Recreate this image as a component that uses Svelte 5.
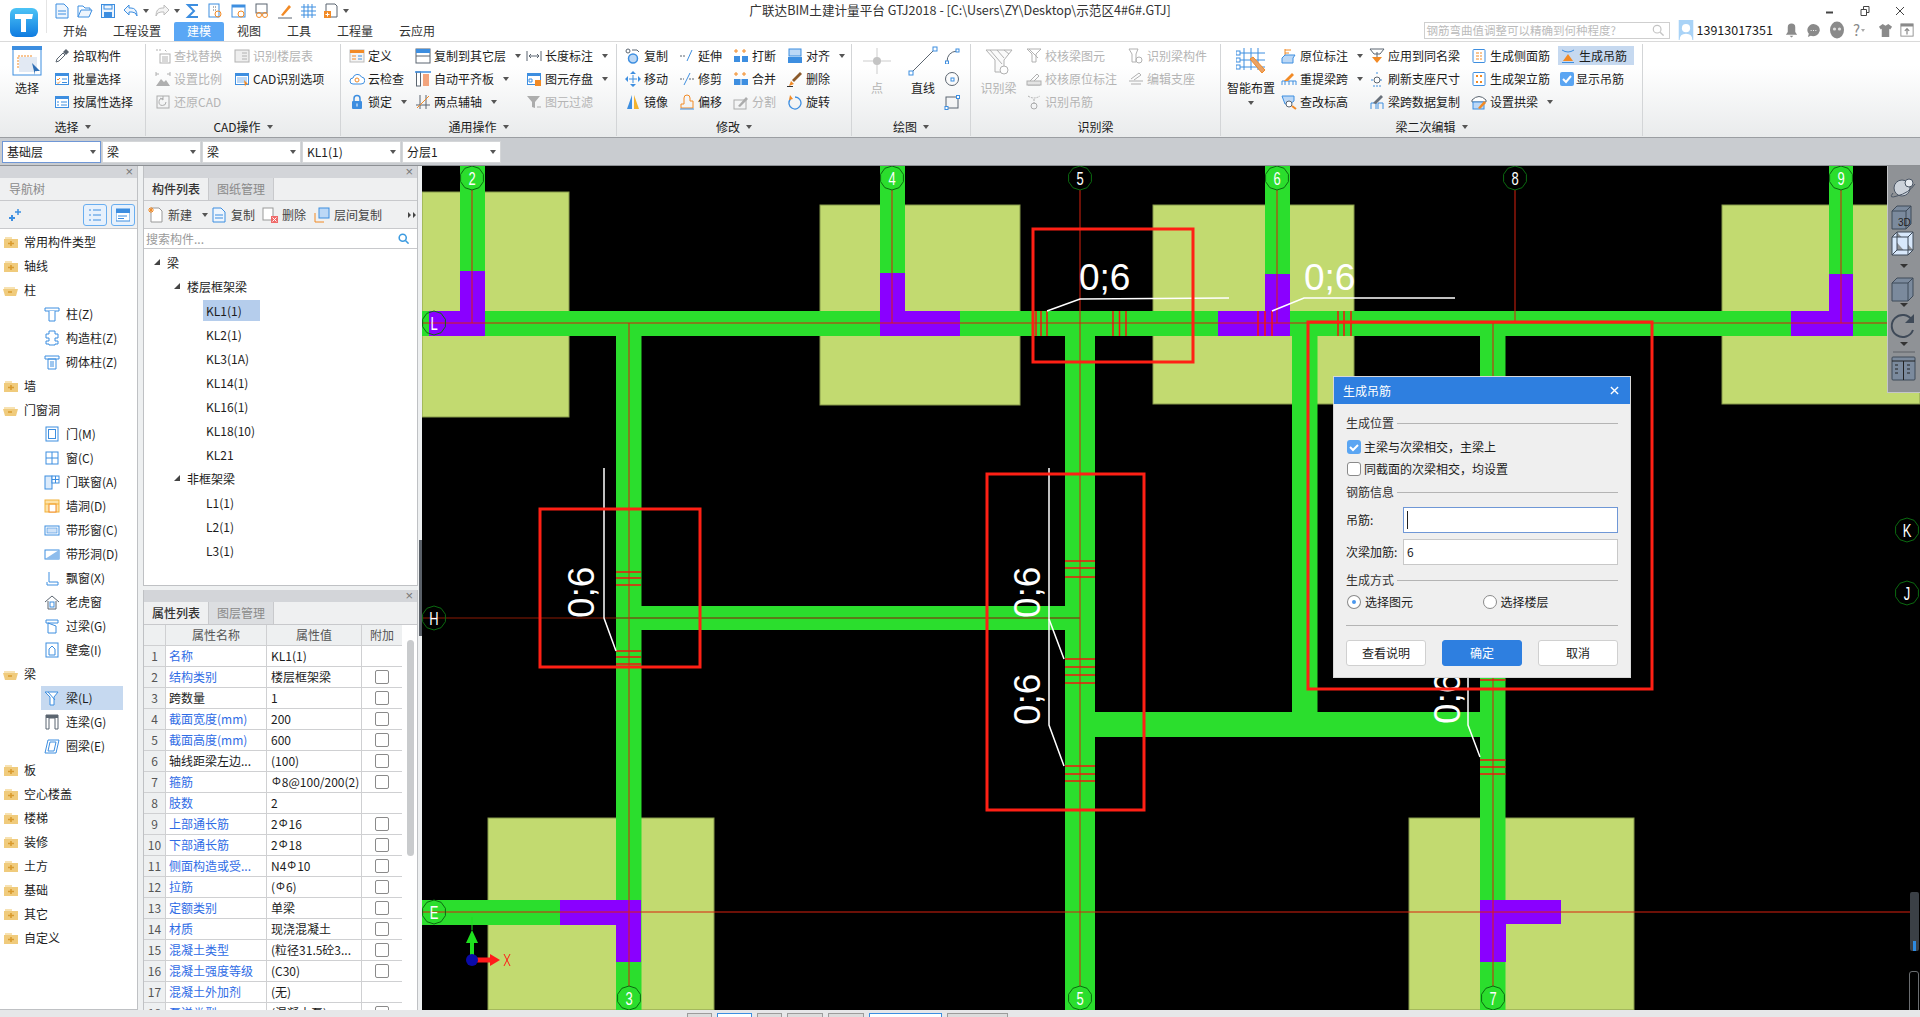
<script>
  const B = "#3d8ee0", O = "#f28a25", G = "#5b6570", L = "#bcd8f6";
  const win = `<rect x="1.5" y="2.5" width="13" height="11" fill="#fff" stroke="${B}"/><rect x="1" y="2" width="14" height="3" fill="${B}"/>`;
  const fold = (s) => `<path d="M1 5h14v9H1z" fill="#f0cb7c"/><path d="M2 3h7v2H2z" fill="#f7e2b2"/><path d="M5 9.5h6${s}" stroke="#d99b2e" stroke-width="1.6"/>`;

  const icons = {
    pick: `<path d="M2 14l1-3 6-6 2 2-6 6z" fill="#fff" stroke="${G}"/><path d="M9 4l3-3 3 3-3 3z" fill="${G}"/>`,
    batch: `${win}<path d="M3 8l1 1 2-2M3 11.5l1 1 2-2" stroke="${O}" fill="none"/><path d="M8 8h5M8 11.5h5" stroke="${B}"/>`,
    prop: `${win}<path d="M3 8h2M7 8h6M3 11h2M7 11h6" stroke="${B}"/>`,
    find: `<path d="M1 2h6M10 2l2 2" stroke="${G}" stroke-dasharray="2 1"/><rect x="5" y="6" width="10" height="9" fill="#fff" stroke="${G}"/><path d="M7 9h6M7 11h6M7 13h6" stroke="${G}"/>`,
    scale: `<path d="M1 3h3M12 3h3M1 1v4M15 1v4" stroke="${G}"/><path d="M1 15l5-7 3 3 2-2 4 6z" fill="${G}"/>`,
    restore: `<rect x="2" y="2" width="12" height="12" fill="none" stroke="${G}"/><path d="M11 8a3.500 3.500 0 1 1-3-3.500M8 2v4l-3-2" stroke="${G}" fill="none"/>`,
    floor: `<rect x="1" y="2" width="14" height="12" fill="#ddd" stroke="${G}"/><path d="M8 5h5M8 8h5M8 11h5" stroke="${G}"/>`,
    cad: `${win}<rect x="3" y="6" width="10" height="6" fill="${L}"/><path d="M10 9l4 4-2 .5-1 2z" fill="${O}"/>`,
    define: `<rect x="1" y="2" width="14" height="12" fill="#f4f4f4" stroke="#bbb"/><rect x="1" y="2" width="14" height="3" fill="${O}"/><path d="M3 8h4M3 11h4" stroke="${O}"/><path d="M9 8h4M9 11h4" stroke="${B}"/>`,
    cloud: `<path d="M4 13a3 3 0 0 1 0-6 4.500 4.500 0 0 1 8.500-1 3.500 3.500 0 0 1-.5 7z" fill="#fff" stroke="${B}"/><circle cx="8" cy="9" r="2" fill="none" stroke="${O}"/>`,
    lock: `<path d="M5 7V4.500a3 3 0 0 1 6 0V7" fill="none" stroke="${B}" stroke-width="1.500"/><rect x="3" y="7" width="10" height="8" rx="1" fill="${B}"/><rect x="7.500" y="9.500" width="1" height="3" fill="#fff"/>`,
    layer: `<rect x="1" y="1" width="14" height="14" fill="#fff" stroke="${G}"/><rect x="1" y="1" width="14" height="4" fill="${B}"/><path d="M1 8h14" stroke="${G}"/>`,
    flat: `<rect x="1.500" y="1" width="4" height="14" fill="#fff" stroke="${G}"/><rect x="8" y="3" width="6" height="12" fill="#f2a47d"/><path d="M0 1h16" stroke="${B}" stroke-width="1.500"/>`,
    two: `<path d="M5 1v14M1 11h14M11 1v14" stroke="${G}"/><path d="M2 14L14 2" stroke="${O}"/>`,
    len: `<path d="M1 3v10M15 3v10M3 8h10M3 8l2-2M3 8l2 2M13 8l-2-2M13 8l-2 2" stroke="${G}" fill="none"/>`,
    store: `${win}<path d="M3 8h3v3H3z" fill="none" stroke="${B}"/><rect x="9" y="9" width="6" height="6" fill="${O}"/>`,
    filter: `<path d="M1 2h13L9 8v6l-3-1V8z" fill="${G}"/><path d="M11 13h4" stroke="${G}"/>`,
    copy: `<circle cx="3" cy="3" r="2" fill="none" stroke="${G}"/><path d="M7 2h5l2 2" fill="none" stroke="${G}"/><circle cx="8" cy="10.500" r="4.500" fill="${L}" stroke="${B}" stroke-width="1.500"/>`,
    move: `<path d="M8 4v8M4 8h8" stroke="${B}"/><path d="M8 0l3 3H5zM8 16l3-3H5zM0 8l3-3v6zM16 8l-3-3v6z" fill="${B}"/>`,
    mirror: `<path d="M7 1v14H2z" fill="${B}"/><path d="M9 1v14h5z" fill="#f4b32c"/>`,
    extend: `<path d="M1 8h5" stroke="${G}" stroke-dasharray="2 1"/><path d="M8 13l5-11" stroke="${B}"/>`,
    trim: `<path d="M1 8h4M10 8h5" stroke="${G}" stroke-dasharray="2 1"/><path d="M5 14l6-12" stroke="${B}"/>`,
    offset: `<path d="M2 14v-4h3V4q0-3 3-3t3 3v3h3v7z" fill="none" stroke="${O}"/><path d="M1 15h14" stroke="${B}"/>`,
    brk: `<path d="M3 1v4M1 3h4M11 1v4M9 3h4" stroke="${O}"/><rect x="1" y="8" width="6" height="6" fill="${B}"/><rect x="9" y="8" width="6" height="6" fill="${B}"/>`,
    merge: `<path d="M3 1v4M1 3h4M11 1v4M9 3h4" stroke="${O}"/><rect x="1" y="8" width="14" height="6" fill="${B}"/><path d="M8 8v6" stroke="#fff"/>`,
    split: `<rect x="1" y="6" width="12" height="9" fill="none" stroke="${G}"/><path d="M5 12l8-9 2 2-8 8z" fill="${G}"/>`,
    align: `<rect x="2" y="1" width="12" height="7" fill="${L}" stroke="${B}"/><rect x="1" y="9" width="14" height="6" fill="${B}"/>`,
    del: `<path d="M2 15l2-5 3 3z" fill="${O}"/><path d="M5 9l8-8 2 2-8 8z" fill="#8b5a2b"/><path d="M0 15.500h6" stroke="#333"/>`,
    rotate: `<path d="M8 3a6 6 0 1 1-4.500 2" fill="none" stroke="${B}" stroke-width="1.300"/><path d="M3 1l3 4-4 1z" fill="${O}"/>`,
    arc: `<path d="M3 14q0-10 10-11" fill="none" stroke="${G}"/><rect x="1.500" y="13" width="3" height="3" fill="#fff" stroke="${B}"/><rect x="12" y="1" width="3" height="3" fill="#fff" stroke="${B}"/>`,
    circ: `<circle cx="8" cy="8" r="6.500" fill="none" stroke="${G}"/><rect x="7" y="7" width="3" height="3" fill="#fff" stroke="${B}"/>`,
    rct: `<rect x="2" y="3" width="12" height="11" fill="none" stroke="${G}"/><rect x="1" y="12.500" width="3" height="3" fill="#fff" stroke="${B}"/><rect x="12.500" y="1.500" width="3" height="3" fill="#fff" stroke="${B}"/>`,
    chk1: `<path d="M1 1h14l-5 5v8H6V6z" fill="none" stroke="${G}"/><path d="M3 1l9 9" stroke="${G}"/>`,
    chk2: `<path d="M2 14h12M3 11l8-8 2 2-6 6" fill="none" stroke="${G}"/><rect x="1" y="10" width="14" height="4" fill="#ccc" stroke="${G}"/>`,
    chk3: `<path d="M2 2q6 4 12 0M8 5v5" fill="none" stroke="${G}" stroke-dasharray="2 1"/><circle cx="8" cy="12" r="3" fill="none" stroke="${G}"/>`,
    chk4: `<path d="M1 1h9l-2 5v8H4V6z" fill="none" stroke="${G}"/><circle cx="11" cy="12" r="3" fill="none" stroke="${G}"/>`,
    chk5: `<path d="M1 10h14M3 13h10M3 8l8-6 2 2-7 5" fill="none" stroke="${G}"/>`,
    note: `<path d="M4 1v7M4 2h6M4 5h4" stroke="${O}"/><path d="M1 10l3-3h10l-2 3v5H1z" fill="${L}" stroke="${B}"/>`,
    lift: `<path d="M1 14v-4h14v4M4 10v4M8 10v4M12 10v4" fill="none" stroke="${B}"/><path d="M3 10l8-8 2 2-6 6z" fill="${O}"/>`,
    elev: `<path d="M1 2h12v5l-4 3H4z" fill="${L}" stroke="${B}"/><circle cx="8" cy="10" r="3" fill="#fff" stroke="${G}"/><path d="M11 12l4 3" stroke="${O}" stroke-width="2"/>`,
    same: `<path d="M1 1h14l-4 5H5z" fill="none" stroke="${G}"/><path d="M8 4v5" stroke="${G}"/><path d="M3 9h10l-5 6z" fill="${O}"/>`,
    refresh: `<path d="M8 1v3M2 9h3M11 9h3M4 15h8" stroke="${B}" stroke-dasharray="2 1"/><circle cx="8" cy="9" r="3" fill="#fff" stroke="${G}"/>`,
    span: `<path d="M2 15V9h5v6M9 15V9h5v6" fill="none" stroke="${B}"/><path d="M4 9l8-8 2 2-7 7z" fill="#68707a"/>`,
    side: `<rect x="2" y="1.500" width="12" height="13" rx="1" fill="#fff" stroke="${B}"/><path d="M5 5h6M5 11h6M5 8h6" stroke="${O}" stroke-dasharray="3 1"/>`,
    erect: `<rect x="2" y="1.500" width="12" height="13" rx="1" fill="#fff" stroke="${B}"/><rect x="5" y="4" width="2" height="2" fill="${O}"/><rect x="9" y="4" width="2" height="2" fill="${O}"/><rect x="5" y="10" width="2" height="2" fill="${O}"/><rect x="9" y="10" width="2" height="2" fill="${O}"/>`,
    arch: `<path d="M1 6q7-7 14 0v2H1z" fill="#fff" stroke="${G}"/><rect x="2" y="8" width="11" height="7" fill="${L}" stroke="${B}"/><path d="M7 14l6-7 2 2-6 6z" fill="${O}"/>`,
    hang: `<path d="M2 2q6 4 12 0" fill="none" stroke="${B}"/><path d="M8 6l5 7H3z" fill="${O}"/><path d="M2 14.500h12" stroke="${B}"/>`,
    show: `<rect x="1" y="1" width="14" height="14" rx="2" fill="#5aa5f2"/><path d="M4 8l3 3 5-6" fill="none" stroke="#fff" stroke-width="2"/>`,
    doc: `<path d="M2 1h8l4 4v10H2z" fill="#eef5fd" stroke="${B}"/><path d="M4 8h8M4 11h8" stroke="${B}"/>`,
    open: `<path d="M1 14V3h5l2 2h5v2" fill="none" stroke="${B}"/><path d="M1 14l3-7h11l-3 7z" fill="#eef5fd" stroke="${B}"/>`,
    save: `<rect x="1.500" y="1.500" width="13" height="13" fill="#eef5fd" stroke="${B}"/><rect x="4" y="2" width="8" height="4" fill="none" stroke="${B}"/><rect x="4" y="9" width="8" height="5" fill="${B}"/>`,
    undo: `<path d="M6 2L1 7l5 5V9h3q4 0 5 4 0-8-6-8H6z" fill="#eef5fd" stroke="${B}"/>`,
    redo: `<path d="M10 2l5 5-5 5V9H7q-4 0-5 4 0-8 6-8h2z" fill="#f4f4f4" stroke="#bdbdbd"/>`,
    sigma: `<path d="M13 2H3l6 6-6 6h10" fill="none" stroke="${B}" stroke-width="2"/>`,
    q1: `<rect x="1" y="1" width="10" height="13" fill="#fff" stroke="${B}"/><path d="M5 4h4M5 7h4" stroke="${G}" stroke-dasharray="1 1"/><circle cx="10" cy="11" r="3" fill="none" stroke="${O}"/>`,
    q2: `<rect x="1" y="2" width="13" height="12" fill="#fff" stroke="${B}"/><rect x="1" y="2" width="13" height="2.500" fill="${B}"/><circle cx="10" cy="11" r="3" fill="none" stroke="${O}"/>`,
    q3: `<rect x="2" y="1" width="11" height="9" fill="#fff" stroke="${G}"/><circle cx="5" cy="12" r="2.500" fill="none" stroke="${O}"/><circle cx="11" cy="12" r="2.500" fill="none" stroke="${O}"/>`,
    q4: `<path d="M4 12l8-10 2 2-8 9z" fill="${O}"/><path d="M1 15h14" stroke="${G}"/>`,
    q5: `<path d="M1 4h15M1 8h15M1 12h15M4 1v14M8 1v14M12 1v14" stroke="${B}"/>`,
    q6: `<path d="M3 1h9l2 2v11H3z" fill="#fff" stroke="${G}"/><rect x="1" y="8" width="7" height="7" fill="${O}"/><path d="M4.500 9.500v4M2.500 11.500h4" stroke="#fff"/>`,
    col: `<path d="M1 2h14v3H1z" fill="#fff" stroke="${B}"/><path d="M5 5v10h6V5" fill="#fff" stroke="${B}"/>`,
    gzz: `<path d="M5 1h6v3h3v4h-3v3h3v3h-3v1H5v-1H2v-3h3V8H2V4h3z" fill="#fff" stroke="${B}"/>`,
    qtz: `<path d="M1 2h14v3H1zM4 5h8v10H4z" fill="#fff" stroke="${B}"/><path d="M6 8h4M6 10h4M6 12h4" stroke="${B}"/>`,
    door: `<rect x="2" y="1" width="12" height="14" fill="#fff" stroke="${B}"/><rect x="4.500" y="3.500" width="7" height="9" fill="#fff" stroke="${B}"/>`,
    window: `<rect x="2" y="2" width="12" height="12" fill="#fff" stroke="${B}"/><path d="M8 2v12M2 8h12" stroke="${B}"/>`,
    dw: `<rect x="1" y="2" width="7" height="13" fill="#dcebfb" stroke="${B}"/><rect x="8" y="2" width="7" height="7" fill="#fff" stroke="${B}"/><path d="M11.500 2v7M8 5.500h7" stroke="${B}"/>`,
    hole: `<rect x="1" y="2" width="14" height="12" fill="#fde2a8" stroke="#f2b23a"/><rect x="5" y="6" width="7" height="8" fill="#fff" stroke="${O}"/><path d="M1 6h14" stroke="#f2b23a"/>`,
    strip: `<rect x="1" y="4" width="14" height="9" fill="#fff" stroke="${B}"/><rect x="3" y="6" width="10" height="5" fill="#cfe2f7" stroke="${B}" stroke-width=".6"/>`,
    striph: `<rect x="1" y="4" width="14" height="9" fill="#fff" stroke="${B}"/><path d="M1 13L15 4v9z" fill="#8dbcec"/>`,
    bay: `<path d="M5 2v10h9v3H3v-3" fill="none" stroke="${B}"/>`,
    dormer: `<path d="M1 8l7-6 7 6M4 7v8h8V7" fill="#fff" stroke="${G}"/><rect x="6" y="8" width="4" height="5" fill="#fff" stroke="${B}"/>`,
    lintel: `<path d="M2 2h12v3H2zM4 5v10h8V8z" fill="#fff" stroke="${B}"/>`,
    niche: `<rect x="2" y="1" width="12" height="14" fill="#fff" stroke="${B}"/><path d="M5 13V7l3-3 3 3v6z" fill="#fff" stroke="${B}"/>`,
    beam: `<path d="M1 2h13l-4 5v8H6V7z" fill="#fff" stroke="${B}"/><path d="M4 2l7 8" stroke="${B}"/>`,
    link: `<path d="M2 15V1h12v14h-3V4H5v11z" fill="#fff" stroke="${G}"/><rect x="2" y="1" width="12" height="3" fill="${G}"/>`,
    ring: `<path d="M4 2h11l-3 13H1z" fill="#fff" stroke="${B}"/><path d="M6 4h6L10 13H4z" fill="none" stroke="${B}"/>`
  };

  const I = (i, t, o = {}) => ({ i, t, ...o });
  const groups = [
    { label: "选择", w: 146, caret: true, cols: [
      { w: 54, big: "sel", t: "选择" },
      { w: 92, items: [I("pick", "拾取构件"), I("batch", "批量选择"), I("prop", "按属性选择")] }
    ]},
    { label: "CAD操作", w: 195, caret: true, pad: 9, cols: [
      { w: 79, items: [I("find", "查找替换", { off: 1 }), I("scale", "设置比例", { off: 1 }), I("restore", "还原CAD", { off: 1 })] },
      { w: 106, items: [I("floor", "识别楼层表", { off: 1 }), I("cad", "CAD识别选项")] }
    ]},
    { label: "通用操作", w: 276, caret: true, pad: 8, cols: [
      { w: 66, items: [I("define", "定义"), I("cloud", "云检查"), I("lock", "锁定", { drop: 1 })] },
      { w: 111, items: [I("layer", "复制到其它层", { drop: 1 }), I("flat", "自动平齐板", { drop: 1 }), I("two", "两点辅轴", { drop: 1 })] },
      { w: 90, items: [I("len", "长度标注", { drop: 1 }), I("store", "图元存盘", { drop: 1 }), I("filter", "图元过滤", { off: 1 })] }
    ]},
    { label: "修改", w: 235, caret: true, pad: 8, cols: [
      { w: 54, items: [I("copy", "复制"), I("move", "移动"), I("mirror", "镜像")] },
      { w: 54, items: [I("extend", "延伸"), I("trim", "修剪"), I("offset", "偏移")] },
      { w: 54, items: [I("brk", "打断"), I("merge", "合并"), I("split", "分割", { off: 1 })] },
      { w: 64, items: [I("align", "对齐", { drop: 1 }), I("del", "删除"), I("rotate", "旋转")] }
    ]},
    { label: "绘图", w: 119, caret: true, cols: [
      { w: 50, big: "pt", t: "点", off: 1 },
      { w: 42, big: "line", t: "直线" },
      { w: 20, items: [I("arc", ""), I("circ", ""), I("rct", "")] }
    ]},
    { label: "识别梁", w: 250, cols: [
      { w: 55, big: "rec", t: "识别梁", off: 1 },
      { w: 102, items: [I("chk1", "校核梁图元", { off: 1 }), I("chk2", "校核原位标注", { off: 1 }), I("chk3", "识别吊筋", { off: 1 })] },
      { w: 92, items: [I("chk4", "识别梁构件", { off: 1 }), I("chk5", "编辑支座", { off: 1 })] }
    ]},
    { label: "梁二次编辑", w: 422, caret: true, cols: [
      { w: 60, big: "smart", t: "智能布置", drop: 1 },
      { w: 88, items: [I("note", "原位标注", { drop: 1 }), I("lift", "重提梁跨", { drop: 1 }), I("elev", "查改标高")] },
      { w: 102, items: [I("same", "应用到同名梁"), I("refresh", "刷新支座尺寸"), I("span", "梁跨数据复制")] },
      { w: 87, items: [I("side", "生成侧面筋"), I("erect", "生成架立筋"), I("arch", "设置拱梁", { drop: 1 })] },
      { w: 80, items: [I("hang", "生成吊筋", { on: 1 }), I("show", "显示吊筋", { tight: 1 })] }
    ]}
  ];

  const bigIcons = {
    sel: `<rect x="1" y="1" width="28" height="28" fill="#fff" stroke="${B}"/><rect x="0" y="0" width="30" height="4" fill="${B}"/><rect x="7" y="11" width="18" height="15" fill="#e2e9f3"/><path d="M6 22V10h14" fill="none" stroke="${O}" stroke-dasharray="2 1"/><path d="M20 17l8 8h-5v4z" fill="#2f6fb5"/>`,
    pt: `<path d="M15 2v26M1 15h28" stroke="#999"/><circle cx="15" cy="15" r="4" fill="#888"/>`,
    line: `<path d="M3 27L27 3" stroke="${G}"/><rect x="1" y="25" width="4" height="4" fill="#fff" stroke="${B}"/><rect x="25" y="1" width="4" height="4" fill="#fff" stroke="${B}"/>`,
    rec: `<path d="M2 4h26l-8 10v12h-9V14z" fill="#f4f4f4" stroke="${G}"/><path d="M6 4l12 14M13 4l7 8M20 4l5 4" stroke="${G}"/><circle cx="20" cy="24" r="4" fill="#fff" stroke="${G}"/>`,
    smart: `<path d="M8 2v22M15 2v22M22 2v22M2 7h27M2 14h27M2 21h27" stroke="${B}"/><rect x="0" y="5" width="4" height="4" fill="#fff" stroke="${B}"/><rect x="0" y="12" width="4" height="4" fill="#fff" stroke="${B}"/><rect x="0" y="19" width="4" height="4" fill="#fff" stroke="${B}"/><path d="M14 13l3-2 12 13-3 3z" fill="#e9a266" stroke="${O}"/>`
  };

  const qat = ["doc", "open", "save", "undo", "|", "redo", "|", "sigma", "q1", "q2", "q3", "q4", "q5", "q6", "|"];

  const tabs = ["开始", "工程设置", "建模", "视图", "工具", "工程量", "云应用"];
  const combos = ["基础层", "梁", "梁", "KL1(1)", "分层1"];

  const nav = [
    ["常用构件类型", 0], ["轴线", 0], ["柱", 1], ["柱(Z)", 2, "col"], ["构造柱(Z)", 2, "gzz"], ["砌体柱(Z)", 2, "qtz"],
    ["墙", 0], ["门窗洞", 1], ["门(M)", 2, "door"], ["窗(C)", 2, "window"], ["门联窗(A)", 2, "dw"], ["墙洞(D)", 2, "hole"],
    ["带形窗(C)", 2, "strip"], ["带形洞(D)", 2, "striph"], ["飘窗(X)", 2, "bay"], ["老虎窗", 2, "dormer"], ["过梁(G)", 2, "lintel"],
    ["壁龛(I)", 2, "niche"], ["梁", 1], ["梁(L)", 2, "beam", true], ["连梁(G)", 2, "link"], ["圈梁(E)", 2, "ring"],
    ["板", 0], ["空心楼盖", 0], ["楼梯", 0], ["装修", 0], ["土方", 0], ["基础", 0], ["其它", 0], ["自定义", 0]
  ];

  const tree = [
    ["梁", 0], ["楼层框架梁", 1], ["KL1(1)", 2, true], ["KL2(1)", 2], ["KL3(1A)", 2], ["KL14(1)", 2], ["KL16(1)", 2],
    ["KL18(10)", 2], ["KL21", 2], ["非框架梁", 1], ["L1(1)", 2], ["L2(1)", 2], ["L3(1)", 2]
  ];

  // name, value, blue label, has checkbox
  const rows = [
    ["名称", "KL1(1)", 1, 0], ["结构类别", "楼层框架梁", 1, 1], ["跨数量", "1", 0, 1], ["截面宽度(mm)", "200", 1, 1],
    ["截面高度(mm)", "600", 1, 1], ["轴线距梁左边...", "(100)", 0, 1], ["箍筋", "^8@100/200(2)", 1, 1], ["肢数", "2", 1, 0],
    ["上部通长筋", "2^16", 1, 1], ["下部通长筋", "2^18", 1, 1], ["侧面构造或受...", "N4^10", 1, 1], ["拉筋", "(^6)", 1, 1],
    ["定额类别", "单梁", 1, 1], ["材质", "现浇混凝土", 1, 1], ["混凝土类型", "(粒径31.5砼3...", 1, 1], ["混凝土强度等级", "(C30)", 1, 1],
    ["混凝土外加剂", "(无)", 1, 0], ["泵送类型", "(混凝土泵)", 1, 1]
  ];

  const pads = [
    [422, 192, 147, 225], [820, 205, 200, 200], [1153, 205, 201, 199], [1722, 205, 198, 199], [488, 818, 226, 192], [1409, 818, 225, 192]
  ];
  const beams = [
    [422, 311, 1498, 25], [460, 166, 25, 145], [880, 166, 25, 145], [1265, 166, 25, 145], [1829, 166, 24, 145],
    [616, 336, 25.500, 674], [1065, 336, 30, 674], [1480, 336, 25.500, 674], [1292, 336, 25.500, 376],
    [641, 606, 424, 24], [1095, 712, 385, 25], [422, 900, 138, 25]
  ];
  const purple = [
    "429,311 460,311 460,271 485,271 485,336 429,336",
    "880,273 905,273 905,311 960,311 960,336 880,336",
    "1218,311 1265,311 1265,274 1290,274 1290,336 1218,336",
    "1791,311 1829,311 1829,274 1853,274 1853,336 1791,336",
    "560,900 641,900 641,962 616,962 616,925 560,925",
    "1480,900 1561,900 1561,924 1506,924 1506,962 1480,962"
  ];
  const vTicks = [1036, 1041, 1047, 1113, 1119.500, 1126, 1258, 1265, 1272, 1338, 1344, 1351];
  const hTicks = [
    [616, 641, [572, 578, 585, 651, 657, 664]],
    [1065, 1095, [561, 568, 577, 659, 667, 675, 683, 766, 774, 781]],
    [1480, 1505.500, [680, 760, 767, 774]]
  ];
  const axes = [
    [1, 422, 323, 1887, 323], [0, 422, 618, 1080, 618], [1, 422, 912, 1910, 912],
    [1, 472, 190, 472, 323], [1, 892, 190, 892, 323], [1, 1277, 190, 1277, 323], [1, 1515, 190, 1515, 323], [1, 1841, 190, 1841, 323],
    [1, 1080, 190, 1080, 986], [1, 629, 323, 629, 986], [1, 1493, 323, 1493, 986]
  ];
  const bubbles = [
    ["2", 472, 178], ["4", 892, 178], ["5", 1080, 178], ["6", 1277, 178], ["8", 1515, 178], ["9", 1841, 178],
    ["L", 434, 323], ["H", 434, 618], ["E", 434, 912], ["3", 629, 998], ["5", 1080, 998], ["7", 1493, 998], ["K", 1907, 530], ["J", 1907, 593]
  ];
  const marks = [[1033, 229, 160, 133], [540, 509, 160, 158], [987, 474, 157, 336], [1308, 322, 344, 367]];
  const leaders = [
    "1047,311 1080,299 1229,298", "1272,311 1304,298 1455,298",
    "604,468 604,618 616,651", "1049,468 1049,619 1064,659", "1049,619 1049,725 1064,766", "1468,660 1468,725 1480,757"
  ];
  const flatText = [[1079, 290], [1304, 290]];
  const upText = [[594, 618], [1040, 618], [1040, 725], [1460, 724]];

  const oct = (x, y) => {
    const p = [];
    for (let k = 0; k < 10; k++) {
      const a = (Math.PI * 2 * k) / 10 + Math.PI / 10;
      p.push(`${(x + 12 * Math.cos(a)).toFixed(1)},${(y + 12 * Math.sin(a)).toFixed(1)}`);
    }
    return p.join(" ");
  };

  const strip = [25, 35, 25, 36, 36, 73, 61];
</script>

{#snippet ico(name, cls = "")}
  <svg class="ico {cls}" viewBox="0 0 16 16" width="16" height="16">{@html icons[name]}</svg>
{/snippet}

{#snippet caret()}
  <i class="caret"></i>
{/snippet}

{#snippet withSym(text)}
  {#each text.split("^") as part, k}
    {#if k > 0}<span class="sym">Φ</span>{/if}{part}
  {/each}
{/snippet}

<div class="page">
  <header class="head">
    <div class="logo">
      <svg viewBox="0 0 30 30" width="30" height="30">
        <defs>
          <linearGradient id="lg" x1="0" y1="0" x2="0" y2="1"><stop offset="0" stop-color="#4cc4f6" /><stop offset="1" stop-color="#0f7be0" /></linearGradient>
        </defs>
        <rect x="1" y="0" width="28" height="29" rx="6" fill="url(#lg)" />
        <path d="M6 6h18l-1 5h-6v13h-5V11H6z" fill="#fff" />
      </svg>
    </div>
    <div class="top">
      <div class="qat">
        {#each qat as q}
          {#if q === "|"}{@render caret()}{:else}{@render ico(q)}{/if}
        {/each}
      </div>
      <div class="title">广联达BIM土建计量平台 GTJ2018 - [C:\Users\ZY\Desktop\示范区4#6#.GTJ]</div>
      <div class="winbtns">
        <svg viewBox="0 0 10 10" width="10" height="10"><path d="M1 6.500h7" stroke="#444" stroke-width="2" /></svg>
        <svg viewBox="0 0 10 10" width="10" height="10"><path d="M1 3.500h5.500v6H1zM3.500 3V.5H9v6H7" fill="none" stroke="#444" /></svg>
        <svg viewBox="0 0 10 10" width="10" height="10"><path d="M1 1l8 8M9 1l-8 8" stroke="#444" /></svg>
      </div>
    </div>
    <div class="tabrow">
      <nav class="tabs">
        {#each tabs as t}
          <span class="tab" class:active={t === "建模"}>{t}</span>
        {/each}
      </nav>
      <div class="user">
        <div class="search">
          <span>钢筋弯曲值调整可以精确到何种程度?</span>
          <svg viewBox="0 0 14 14" width="12" height="12"><circle cx="6" cy="6" r="4.500" fill="none" stroke="#c4c4c4" stroke-width="1.400" /><path d="M9.500 9.500l4 4" stroke="#c4c4c4" stroke-width="1.600" /></svg>
        </div>
        <svg class="avatar" viewBox="0 0 16 22" width="16" height="20">
          <rect width="16" height="22" fill="#a9d3f7" /><circle cx="8" cy="9" r="4.500" fill="#fff" /><path d="M1 22q0-7 7-7t7 7z" fill="#fff" />
        </svg>
        <span class="phone">13913017351</span>
        <span class="uicons">
          <svg viewBox="0 0 16 16" width="15" height="16"><path d="M8 1a4 4 0 0 1 4 4v5l2 3H2l2-3V5a4 4 0 0 1 4-4zM6 14h4l-2 2z" fill="#8a8a8a" /></svg>
          <svg viewBox="0 0 16 16" width="15" height="15"><path d="M8 1a7 6.500 0 1 1-3 12.500L2 15l1-3.500A7 6.500 0 0 1 8 1z" fill="#8a8a8a" /><path d="M5 8h1M7.500 8h1M10 8h1" stroke="#fff" /></svg>
          <svg viewBox="0 0 18 18" width="18" height="20"><ellipse cx="9" cy="9" rx="7" ry="8.500" fill="#8a8a8a" /><circle cx="6.500" cy="8" r="1.600" fill="#ddd" /><circle cx="11.500" cy="8" r="1.600" fill="#ddd" /></svg>
          <span class="help">?</span><i class="tiny"></i>
          <svg class="shirt" viewBox="0 0 16 16" width="15" height="15"><path d="M5 1L1 4l2 3 1-1v9h8V6l1 1 2-3-4-3-3 2z" fill="#8a8a8a" /></svg>
          <svg viewBox="0 0 16 16" width="14" height="14"><rect x="1" y="1" width="14" height="14" fill="#fff" stroke="#8a8a8a" /><path d="M1 1h14v3H1z" fill="#8a8a8a" /><path d="M8 13V7M5.500 9L8 6.500 10.500 9" fill="none" stroke="#8a8a8a" stroke-width="1.400" /></svg>
        </span>
      </div>
    </div>
  </header>

  <section class="ribbon">
    {#each groups as g}
      <div class="group" style="width:{g.w}px">
        <div class="gbody" style="padding-left:{g.pad || 0}px">
          {#each g.cols as c}
            <div class="col" style="width:{c.w}px">
              {#if c.big}
                <div class="big" class:off={c.off}>
                  <svg viewBox="0 0 30 30" width="30" height="30">{@html bigIcons[c.big]}</svg>
                  <span>{c.t}</span>
                  {#if c.drop}{@render caret()}{/if}
                </div>
              {:else}
                {#each c.items as it}
                  <div class="item" class:off={it.off} class:on={it.on} class:tight={it.tight}>
                    {@render ico(it.i)}
                    {#if it.t}<span>{it.t}</span>{/if}
                    {#if it.drop}{@render caret()}{/if}
                  </div>
                {/each}
              {/if}
            </div>
          {/each}
        </div>
        <div class="glabel">{g.label}{#if g.caret}{@render caret()}{/if}</div>
      </div>
    {/each}
  </section>

  <div class="combos">
    {#each combos as c, k}
      <div class="combo" class:focus={k === 0}>{c}{@render caret()}</div>
    {/each}
  </div>

  <main class="work">
    <aside class="panel nav">
      <div class="phead"><span class="x">×</span></div>
      <div class="navtitle">导航树</div>
      <div class="navbar">
        <svg viewBox="0 0 14 14" width="14" height="14"><path d="M4 7v6M1 10h6" stroke="{B}" stroke-width="2" /><path d="M10 1v6M7 4h6" stroke="{B}" stroke-width="1.500" /></svg>
        <span class="navbtns">
          <span class="nbtn"><svg viewBox="0 0 14 14" width="14" height="14"><path d="M1 2h2M5 2h8M1 7h2M5 7h8M1 12h2M5 12h8" stroke="{B}" /></svg></span>
          <span class="nbtn"><svg viewBox="0 0 14 14" width="14" height="14"><rect x="0" y="1" width="14" height="12" fill="#fff" stroke="{B}" /><rect x="0" y="1" width="14" height="4" fill="{B}" /><path d="M2 8h9M2 10.500h6" stroke="{B}" /></svg></span>
        </span>
      </div>
      <div class="navlist">
        {#each nav as [t, kind, icon, sel]}
          {#if kind === 2}
            <div class="nrow child" class:sel>{@render ico(icon)}<span>{t}</span></div>
          {:else}
            <div class="nrow">
              <svg class="folder" viewBox="0 0 16 16" width="16" height="16">
                {#if kind === 1}
                  <path d="M1 5h11v2H1z" fill="#f7e2b2" /><path d="M0 7h15l-2 7H2z" fill="#f0cb7c" /><path d="M5 10h4" stroke="#d99b2e" stroke-width="1.500" />
                {:else}
                  {@html fold("M8 7v5")}
                {/if}
              </svg>
              <span>{t}</span>
            </div>
          {/if}
        {/each}
      </div>
    </aside>

    <div class="mid">
      <section class="panel list">
        <div class="phead"><span class="x">×</span></div>
        <div class="ptabs"><span class="ptab active">构件列表</span><span class="ptab">图纸管理</span></div>
        <div class="tools">
          <span class="tool new">
            <svg viewBox="0 0 16 16" width="16" height="16"><path d="M3 1h8l3 3v11H3z" fill="#fff" stroke="#999" /><path d="M1 1l4 4M5 1L1 5M3 0v6M0 3h6" stroke="{O}" /></svg>新建{@render caret()}
          </span>
          <span class="tool copy">{@render ico("doc")}复制</span>
          <span class="tool del">
            <svg viewBox="0 0 16 16" width="16" height="16"><rect x="1" y="1" width="10" height="12" fill="#fff" stroke="#999" /><rect x="9" y="9" width="7" height="7" fill="#ef6a6a" /><path d="M10.500 10.500l4 4M14.500 10.500l-4 4" stroke="#fff" /></svg>删除
          </span>
          <span class="tool lay">
            <svg viewBox="0 0 16 16" width="16" height="16"><path d="M1 6v9h9" fill="none" stroke="{O}" /><rect x="5" y="1" width="10" height="10" fill="{L}" stroke="{B}" /></svg>层间复制
          </span>
          <svg class="more" viewBox="0 0 8 8" width="8" height="8"><path d="M0 1l3 3-3 3zM5 1l3 3-3 3z" fill="#444" /></svg>
        </div>
        <div class="find">
          <span>搜索构件...</span>
          <svg viewBox="0 0 14 14" width="11" height="11"><circle cx="6" cy="6" r="4.500" fill="none" stroke="#3d9be0" stroke-width="2" /><path d="M9.500 9.500l4 4" stroke="#3d9be0" stroke-width="2" /></svg>
        </div>
        <div class="tree">
          {#each tree as [t, lv, sel]}
            <div class="trow lv{lv}">
              {#if lv < 2}<i class="tri"></i>{/if}
              <span class:sel>{t}</span>
            </div>
          {/each}
        </div>
      </section>

      <section class="panel props">
        <div class="phead"><span class="x">×</span></div>
        <div class="ptabs"><span class="ptab active">属性列表</span><span class="ptab">图层管理</span></div>
        <div class="table">
          <div class="grid">
            <div class="tr th"><span></span><span>属性名称</span><span>属性值</span><span>附加</span></div>
            {#each rows as [n, v, blue, chk], k}
              <div class="tr">
                <span class="num">{k + 1}</span>
                <span class="name" class:blue>{n}</span>
                <span class="val">{@render withSym(v)}</span>
                <span class="add">{#if chk}<i class="cb"></i>{/if}</span>
              </div>
            {/each}
          </div>
          <div class="scroll"><i></i></div>
        </div>
      </section>
    </div>
    <i class="grip"></i>

    <div class="canvas">
      <svg class="draw" viewBox="422 166 1498 844" width="1498" height="844">
        <rect x="422" y="166" width="1498" height="844" fill="#000" />
        {#each pads as [x, y, w, h]}
          <rect {x} {y} width={w} height={h} fill="#c2da70" stroke="#86994a" />
        {/each}
        {#each beams as [x, y, w, h]}
          <rect {x} {y} width={w} height={h} fill="#2bde2d" />
        {/each}
        {#each purple as points}
          <polygon {points} fill="#8a00ff" />
        {/each}
        {#each vTicks as x}
          <line x1={x} x2={x} y1="311" y2="336" stroke="#f5140f" stroke-width="1.500" />
        {/each}
        {#each hTicks as [x1, x2, ys]}
          {#each ys as y}
            <line {x1} {x2} y1={y} y2={y} stroke="#f5140f" stroke-width="1.500" />
          {/each}
        {/each}
        {#each axes as [bright, x1, y1, x2, y2]}
          <line {x1} {y1} {x2} {y2} stroke={bright ? "#d8200f" : "#8c1a05"} stroke-width="1" />
        {/each}
        {#each bubbles as [t, x, y]}
          <polygon points={oct(x, y)} fill="none" stroke="#0b6a10" />
          <text class="bub" transform="translate({x} {y + 7}) scale(.72 1)">{t}</text>
        {/each}
        {#each leaders as points}
          <polyline {points} fill="none" stroke="#fff" stroke-width="1.500" />
        {/each}
        {#each flatText as [x, y]}
          <text class="tag" {x} {y}>0;6</text>
        {/each}
        {#each upText as [x, y]}
          <text class="tag" transform="translate({x} {y}) rotate(-90)">0;6</text>
        {/each}
        {#each marks as [x, y, w, h]}
          <rect {x} {y} width={w} height={h} fill="none" stroke="#ff2015" stroke-width="3" />
        {/each}
        <path d="M472 960V942" stroke="#1fe01f" stroke-width="4" />
        <path d="M472 930l-6 13h12z" fill="#1fe01f" />
        <path d="M472 930v-13" stroke="#1fe01f" />
        <path d="M476 960h16" stroke="#ff1a1a" stroke-width="5" />
        <path d="M500 960l-10-6v12z" fill="#ff1a1a" />
        <ellipse cx="472" cy="960" rx="6" ry="6" fill="#0a0aa8" />
        <path d="M504 954l6 12M510 954l-6 12" stroke="#ff1a1a" />
      </svg>

      <div class="rtool">
        <svg viewBox="0 0 32 226" width="32" height="226">
          <ellipse cx="14" cy="22" rx="8" ry="8" fill="#ccd2da" stroke="#4a5564" />
          <circle cx="21" cy="17" r="4" fill="#e6eaef" stroke="#4a5564" />
          <path d="M5 27q-5 6 4 3 12-3 18-12" fill="none" stroke="#4a5564" />
          <path d="M4 45l5-5h14v18l-5 5H4zM4 45h14v18M18 45l5-5" fill="#7b8a9d" stroke="#3f4a58" />
          <text class="cube" x="10" y="60">3D</text>
          <path d="M4 71l5-5h16v18l-5 5H4zM4 71h16v18M20 71l5-5M9 66v18h16M9 84l-5 5" fill="#d8e8fb" stroke="#3f4a58" />
          <path d="M12 98h8l-4 4z" fill="#333" />
          <path d="M4 117l5-5h16v18l-5 5H4zM4 117h16v18M20 117l5-5" fill="#7b8a9d" stroke="#3f4a58" />
          <path d="M12 137h8l-4 4z" fill="#333" />
          <path d="M24 154a11 11 0 1 0 1 10" fill="none" stroke="#3f4a58" stroke-width="2" />
          <path d="M26 148v9h-9z" fill="#3f4a58" />
          <path d="M12 176h8l-4 4z" fill="#333" />
          <path d="M5 186h22" stroke="#5c6166" />
          <rect x="4" y="191" width="23" height="23" rx="1" fill="#7b8a9d" stroke="#3f4a58" />
          <path d="M4 195h23M15.500 195v19M7 199h3M7 203h3M7 207h3M19 199h3M19 203h3M19 207h3" stroke="#222" />
        </svg>
      </div>
      <div class="slide"><i></i></div>
      <div class="slide2"></div>

      <div class="dialog">
        <div class="dtitle"><span>生成吊筋</span>
          <svg viewBox="0 0 10 10" width="9" height="9"><path d="M1 1l8 8M9 1l-8 8" stroke="#fff" stroke-width="1.500" /></svg>
        </div>
        <div class="dbody">
          <div class="sect">生成位置</div>
          <label class="chk first"><i class="box checked"><svg viewBox="0 0 14 14" width="14" height="14"><path d="M3 7l3 3 5-5" fill="none" stroke="#fff" stroke-width="2" /></svg></i>主梁与次梁相交，主梁上</label>
          <label class="chk"><i class="box"></i>同截面的次梁相交，均设置</label>
          <div class="sect">钢筋信息</div>
          <div class="field"><span>吊筋:</span><div class="inp focus"><i class="cursor"></i></div></div>
          <div class="field"><span>次梁加筋:</span><div class="inp">6</div></div>
          <div class="sect">生成方式</div>
          <div class="radios">
            <span class="rad"><i class="dot on"></i>选择图元</span>
            <span class="rad"><i class="dot"></i>选择楼层</span>
          </div>
          <hr />
          <div class="btns">
            <span class="btn">查看说明</span><span class="btn primary">确定</span><span class="btn">取消</span>
          </div>
        </div>
      </div>
    </div>
  </main>

  <footer class="foot">
    {#each strip as w, k}
      <i style="width:{w}px" class:lit={k === 1 || k === 5}></i>
    {/each}
  </footer>
</div>

<style>
  :global(body) {
    margin: 0;
    overflow: hidden;
  }
  .page {
    width: 1920px;
    height: 1017px;
    display: flex;
    flex-direction: column;
    overflow: hidden;
    background: #e6e7e9;
    color: #1c1c1c;
    font: 12px/16px "Noto Sans CJK SC", "Liberation Sans", sans-serif;
  }
  i {
    display: block;
    font-style: normal;
  }
  .ico {
    flex: none;
  }
  .caret {
    width: 0;
    height: 0;
    margin-left: 6px;
    border: 3px solid transparent;
    border-top: 4px solid #555;
    border-bottom: 0;
    flex: none;
  }

  /* title bar */
  .head {
    position: relative;
    height: 41px;
    background: #fff;
  }
  .logo {
    position: absolute;
    left: 9px;
    top: 8px;
    width: 30px;
    height: 30px;
  }
  .logo::after {
    content: "";
    position: absolute;
    left: 37px;
    top: -8px;
    width: 1px;
    height: 33px;
    background: #e4e4e4;
  }
  .top {
    display: grid;
    grid-template-columns: 1fr auto 1fr;
    height: 22px;
    align-items: center;
  }
  .qat {
    display: flex;
    align-items: center;
    gap: 7px;
    padding-left: 54px;
  }
  .qat .caret {
    margin: 0 -2px 0 -3px;
  }
  .title {
    color: #333;
    font-size: 12.600px;
    padding-bottom: 3px;
    white-space: nowrap;
  }
  .winbtns {
    display: flex;
    justify-content: flex-end;
    gap: 25px;
    padding-right: 15px;
  }
  .tabrow {
    display: flex;
    justify-content: space-between;
    height: 19px;
  }
  .tabs {
    display: flex;
    padding-left: 50px;
  }
  .tab {
    padding: 0 13px;
    line-height: 18px;
    color: #333;
  }
  .tab.active {
    background: #5aa7f5;
    color: #fff;
    border-radius: 2px 2px 0 0;
  }
  .user {
    display: flex;
    align-items: center;
    margin-top: -2px;
    height: 20px;
    padding-right: 6px;
  }
  .search {
    box-sizing: border-box;
    width: 246px;
    height: 17px;
    padding: 0 1px 0 2px;
    border: 1px solid #cfcfcf;
    display: flex;
    align-items: center;
    justify-content: space-between;
    color: #bbb;
    font-size: 11.500px;
    white-space: nowrap;
    margin-right: 8px;
  }
  .search svg {
    margin-right: 4px;
  }
  .avatar {
    margin-right: 3px;
  }
  .phone {
    font: 12.500px/18px "Noto Sans CJK SC", sans-serif;
    margin-right: 11px;
  }
  .uicons {
    display: flex;
    align-items: center;
    gap: 7px;
  }
  .help {
    font-size: 15px;
    color: #8a8a8a;
    margin-right: -6px;
  }
  .tiny {
    width: 0;
    border: 2px solid transparent;
    border-top: 3px solid #aaa;
    border-bottom: 0;
  }
  .shirt {
    margin-left: 6px;
  }

  /* ribbon */
  .ribbon {
    height: 95px;
    display: flex;
    border-top: 1px solid #dadada;
    border-bottom: 1px solid #9b9ea2;
    box-sizing: border-box;
    height: 97px;
    background: linear-gradient(#fff 25%, #e9ebec);
  }
  .group {
    flex: none;
    box-sizing: border-box;
    height: 92px;
    margin-top: 2px;
    border-right: 1px solid #d3d5d7;
    display: flex;
    flex-direction: column;
  }
  .gbody {
    height: 70px;
    display: flex;
  }
  .col {
    flex: none;
    display: grid;
    grid-template-rows: repeat(3, 23px);
    white-space: nowrap;
  }
  .item {
    display: flex;
    align-items: center;
    gap: 3px;
    height: 23px;
  }
  .item.on {
    background: #c6d9f0;
    height: 19px;
    margin: 2px 4px 2px 0;
    padding-left: 2px;
  }
  .item.tight {
    padding-left: 1px;
    gap: 1px;
  }
  .off {
    color: #b4b4b4;
  }
  .off svg {
    filter: grayscale(1) opacity(0.5);
  }
  .big {
    grid-row: 1 / 4;
    display: flex;
    flex-direction: column;
    align-items: center;
    padding-top: 2px;
  }
  .big span {
    margin-top: 3px;
    line-height: 18px;
    white-space: nowrap;
  }
  .big .caret {
    margin: 4px 0 0;
  }
  .glabel {
    flex: 1;
    display: flex;
    align-items: center;
    justify-content: center;
    padding-top: 3px;
  }

  /* combos */
  .combos {
    flex: none;
    box-sizing: border-box;
    height: 28px;
    padding: 3px 2px 0;
    display: flex;
    gap: 1px;
    background: #c9ccd0;
    border-bottom: 1px solid #8d9094;
  }
  .combo {
    box-sizing: border-box;
    width: 99px;
    height: 22px;
    padding: 0 4px;
    display: flex;
    align-items: center;
    justify-content: space-between;
    background: #fff;
    border: 1px solid #d4d6d8;
  }
  .combo.focus {
    border-color: #6f97d6;
  }

  /* work area */
  .work {
    flex: none;
    position: relative;
    height: 844px;
    display: flex;
    background: #eef0f1;
  }
  .grip {
    position: absolute;
    left: 419px;
    top: 374px;
    width: 3px;
    height: 96px;
    background: #5a6068;
  }
  .panel {
    box-sizing: border-box;
    background: #fff;
    border: 1px solid #bfc1c4;
    border-top: 0;
    display: flex;
    flex-direction: column;
  }
  .phead {
    height: 12px;
    flex: none;
    background: #d3d5d9;
    display: flex;
    justify-content: flex-end;
    align-items: center;
    padding-right: 4px;
  }
  .x {
    font: 13px/12px "Liberation Sans", sans-serif;
    color: #777;
  }
  .nav {
    width: 138px;
    border-left: 0;
    margin-right: 5px;
  }
  .navtitle {
    height: 22px;
    line-height: 22px;
    padding-left: 9px;
    color: #8a8a8a;
    background: #eff0f1;
    border-bottom: 1px solid #c8c9cc;
  }
  .navbar {
    height: 27px;
    display: flex;
    align-items: center;
    justify-content: space-between;
    padding-left: 8px;
    background: #eff0f1;
    border-bottom: 1px solid #c8c9cc;
  }
  .navbtns {
    display: flex;
    gap: 4px;
    padding-right: 2px;
  }
  .nbtn {
    width: 22px;
    height: 20px;
    display: flex;
    align-items: center;
    justify-content: center;
    background: #e7f1fc;
    border: 1px solid #69aef0;
    border-radius: 3px;
  }
  .navlist {
    padding-top: 1px;
  }
  .nrow {
    height: 24px;
    display: flex;
    align-items: center;
    padding-left: 3px;
    gap: 5px;
  }
  .nrow.child {
    padding-left: 44px;
    gap: 6px;
    width: 82px;
    box-sizing: content-box;
  }
  .nrow.sel {
    background: #c6d9f0;
    margin-left: 41px;
    padding-left: 3px;
    width: 79px;
  }
  .mid {
    width: 275px;
    display: flex;
    flex-direction: column;
    gap: 4px;
    margin-right: 4px;
  }
  .list {
    height: 420px;
  }
  .props {
    height: 420px;
    overflow: hidden;
    border-bottom: 0;
  }
  .ptabs {
    height: 22px;
    flex: none;
    display: flex;
    background: #eff0f1;
    border-bottom: 1px solid #c8c9cc;
  }
  .ptab {
    width: 64px;
    text-align: center;
    line-height: 22px;
    background: #dcdee1;
    color: #8a8a8a;
    border-right: 1px solid #c8c9cc;
  }
  .ptab.active {
    background: #eff0f1;
    color: #333;
    font-weight: 500;
  }
  .tools {
    height: 27px;
    flex: none;
    display: flex;
    align-items: center;
    background: #eff0f1;
    border-bottom: 1px solid #c8c9cc;
    padding-left: 4px;
  }
  .tool {
    display: flex;
    align-items: center;
    gap: 4px;
    color: #444;
  }
  .tool.new { width: 63px; }
  .tool.copy { width: 51px; }
  .tool.del { width: 52px; }
  .tool.lay { width: 94px; }
  .find {
    height: 19px;
    flex: none;
    display: flex;
    align-items: center;
    justify-content: space-between;
    padding: 0 8px 0 2px;
    color: #9a9a9a;
    border-bottom: 1px solid #c8c9cc;
  }
  .tree {
    flex: 1;
    padding-top: 1px;
  }
  .trow {
    height: 24px;
    display: flex;
    align-items: center;
  }
  .trow.lv0 { padding-left: 10px; }
  .trow.lv1 { padding-left: 30px; }
  .trow.lv2 { padding-left: 62px; }
  .tri {
    width: 0;
    height: 0;
    margin-right: 7px;
    border-left: 6px solid transparent;
    border-bottom: 6px solid #444;
  }
  .trow span {
    padding: 0 3px;
    margin-left: -3px;
    line-height: 21px;
  }
  .trow span.sel {
    background: #b5cdec;
    width: 51px;
  }
  .table {
    flex: 1;
    display: flex;
    min-height: 0;
    overflow: hidden;
  }
  .grid {
    width: 258px;
    flex: none;
  }
  .tr {
    display: grid;
    grid-template-columns: 21px 100px 94px 40px;
    column-gap: 1px;
    height: 21px;
    box-sizing: border-box;
    border-bottom: 1px solid #cfd0d2;
    background: #cfd0d2;
  }
  .tr > span {
    background: #fff;
    display: flex;
    align-items: center;
    overflow: hidden;
    white-space: nowrap;
  }
  .th > span {
    background: #eef0f1;
    justify-content: center;
    color: #555;
  }
  .num {
    background: #eef0f1 !important;
    justify-content: center;
    color: #555;
  }
  .name {
    padding-left: 3px;
  }
  .blue {
    color: #2f6ce5;
  }
  .val {
    padding-left: 4px;
  }
  .sym {
    font-size: 11px;
    position: relative;
    top: -2px;
    padding: 0 1px;
  }
  .add {
    justify-content: center;
  }
  .cb {
    box-sizing: border-box;
    width: 14px;
    height: 14px;
    border: 1px solid #8a8a8a;
    border-radius: 2px;
    background: #fff;
  }
  .scroll {
    flex: 1;
    padding: 15px 3px 0 5px;
    background: #fff;
  }
  .scroll i {
    width: 7px;
    height: 216px;
    border-radius: 4px;
    background: #c9cbcd;
  }

  /* drawing */
  .canvas {
    position: relative;
    width: 1498px;
    height: 844px;
    overflow: hidden;
  }
  .draw {
    display: block;
  }
  .bub {
    font: 18px "Liberation Sans", sans-serif;
    fill: #fff;
    text-anchor: middle;
  }
  .tag {
    font: 37px "Liberation Sans", sans-serif;
    fill: #fff;
  }
  .cube {
    font: 10px "Liberation Sans", sans-serif;
    fill: #222;
  }
  .rtool {
    position: absolute;
    right: 0;
    top: 0;
    width: 32px;
    height: 226px;
    background: #8f9296;
    border-left: 1px solid #c4c6c8;
    border-bottom: 1px solid #c4c6c8;
  }
  .slide {
    position: absolute;
    right: 1px;
    top: 726px;
    width: 9px;
    height: 59px;
    border-radius: 2px;
    background: #3b4046;
    display: flex;
    justify-content: center;
    align-items: flex-end;
  }
  .slide i {
    width: 3px;
    height: 10px;
    background: #2e8ae0;
  }
  .slide2 {
    position: absolute;
    right: 1px;
    top: 805px;
    width: 8px;
    height: 60px;
    border: 1px solid #6a6d70;
    border-radius: 3px;
  }

  /* dialog */
  .dialog {
    position: absolute;
    left: 912px;
    top: 211px;
    width: 296px;
    height: 300px;
    background: #efefef;
    display: flex;
    flex-direction: column;
    box-shadow: 0 0 0 1px #d8d8d8;
  }
  .dtitle {
    height: 27px;
    flex: none;
    background: #2e7fe0;
    color: #fff;
    display: flex;
    align-items: center;
    justify-content: space-between;
    padding: 0 11px 0 9px;
  }
  .dbody {
    padding: 11px 12px 0;
    display: flex;
    flex-direction: column;
  }
  .sect {
    height: 16px;
    line-height: 16px;
    display: flex;
    align-items: center;
    gap: 3px;
    color: #333;
  }
  .sect::after {
    content: "";
    flex: 1;
    height: 1px;
    background: #b4b4b4;
  }
  .chk {
    height: 22px;
    display: flex;
    align-items: center;
    gap: 3px;
    padding-left: 1px;
  }
  .chk.first {
    margin-top: 5px;
  }
  .box {
    box-sizing: border-box;
    width: 14px;
    height: 14px;
    border: 1px solid #8a8a8a;
    border-radius: 3px;
    background: #fff;
  }
  .box svg {
    display: block;
  }
  .box.checked {
    border: 0;
    background: #5aa5f2;
  }
  .field {
    display: flex;
    align-items: center;
    justify-content: space-between;
    height: 26px;
    margin-bottom: 6px;
  }
  .sect + .field {
    margin-top: 7px;
  }
  .field + .sect {
    margin-top: 1px;
  }
  .chk + .sect {
    margin-top: 4px;
  }
  .inp {
    box-sizing: border-box;
    width: 215px;
    height: 26px;
    padding: 0 3px;
    line-height: 24px;
    background: #fff;
    border: 1px solid #c8c8c8;
    display: flex;
    align-items: center;
  }
  .inp.focus {
    border-color: #6f97d6;
  }
  .cursor {
    width: 1px;
    height: 18px;
    background: #222;
  }
  .radios {
    display: flex;
    height: 28px;
    align-items: center;
    padding-left: 1px;
  }
  .rad {
    width: 139px;
    display: flex;
    align-items: center;
    gap: 4px;
  }
  .dot {
    box-sizing: border-box;
    width: 14px;
    height: 14px;
    border: 1px solid #8a8a8a;
    border-radius: 50%;
    background: #fff;
  }
  .dot.on {
    border: 4px solid #fff;
    background: #4a97ee;
    box-shadow: 0 0 0 1px #8a8a8a;
    width: 12px;
    height: 12px;
    margin: 1px;
  }
  hr {
    width: 100%;
    height: 1px;
    margin: 9px 0 14px;
    border: 0;
    background: #b4b4b4;
  }
  .btns {
    display: flex;
    justify-content: space-between;
  }
  .btn {
    box-sizing: border-box;
    width: 80px;
    height: 26px;
    line-height: 24px;
    text-align: center;
    background: #fff;
    border: 1px solid #d0d0d0;
    border-radius: 3px;
  }
  .btn.primary {
    background: #2e7fe0;
    border-color: #2e7fe0;
    color: #fff;
  }

  /* status strip */
  .foot {
    flex: 1;
    display: flex;
    gap: 5px;
    padding: 3px 0 0 687px;
    background: #e6e7e9;
    overflow: hidden;
  }
  .foot i {
    height: 10px;
    flex: none;
    background: #dcdcdc;
    border: 1px solid #9c9c9c;
    box-sizing: border-box;
  }
  .foot i.lit {
    background: #fff;
    border-color: #3d8ee0;
  }
</style>
